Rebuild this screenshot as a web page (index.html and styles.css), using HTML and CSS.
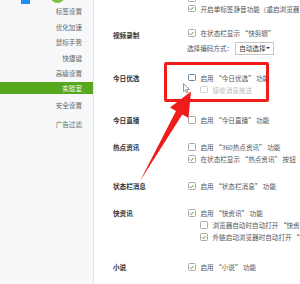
FILE: index.html
```html
<!DOCTYPE html>
<html>
<head>
<meta charset="utf-8">
<link rel="stylesheet" href="styles.css">
</head>
<body>
<div class="app">
  <aside class="sidebar">
    <div class="brand"><span class="brand-blue"></span><span class="brand-green"></span></div>
    <nav class="nav">
      <div class="nav-item">标签设置</div>
      <div class="nav-item">优化加速</div>
      <div class="nav-item">鼠标手势</div>
      <div class="nav-item">快捷键</div>
      <div class="nav-item">高级设置</div>
      <div class="nav-item active">实验室</div>
      <div class="nav-item after-active">安全设置</div>
      <div class="nav-item last">广告过滤</div>
    </nav>
  </aside>
  <main class="content">
    <section class="group g0">
      <div class="label"></div>
      <div class="options">
        <div class="row r-a"><span class="cb checked"><svg viewBox="0 0 10 10"><path d="M2.2 5.1 L4.2 7.1 L7.9 2.7"/></svg></span></div>
        <div class="row r-b"><span class="cb checked"><svg viewBox="0 0 10 10"><path d="M2.2 5.1 L4.2 7.1 L7.9 2.7"/></svg></span><span class="txt">开启单标签静音功能（重启浏览器</span></div>
      </div>
    </section>
    <section class="group g1">
      <div class="label l-low">视频录制</div>
      <div class="options">
        <div class="row"><span class="cb checked"><svg viewBox="0 0 10 10"><path d="M2.2 5.1 L4.2 7.1 L7.9 2.7"/></svg></span><span class="txt">在状态栏显示 “快剪辑”</span></div>
        <div class="row select-row"><span class="txt">选择编码方式：</span><span class="select"><span>自动选择</span><span class="caret"></span></span></div>
      </div>
    </section>
    <section class="group g2">
      <div class="label">今日优选</div>
      <div class="options">
        <div class="row"><span class="cb focus"></span><span class="txt">启用 “今日优选” 功能</span></div>
        <div class="row sub disabled"><span class="cb"></span><span class="txt">接收消息推送</span></div>
      </div>
    </section>
    <section class="group g3">
      <div class="label">今日直播</div>
      <div class="options">
        <div class="row"><span class="cb"></span><span class="txt">启用 “今日直播” 功能</span></div>
      </div>
    </section>
    <section class="group g4">
      <div class="label">热点资讯</div>
      <div class="options">
        <div class="row"><span class="cb"></span><span class="txt">启用 “360热点资讯” 功能</span></div>
        <div class="row"><span class="cb checked"><svg viewBox="0 0 10 10"><path d="M2.2 5.1 L4.2 7.1 L7.9 2.7"/></svg></span><span class="txt">在状态栏显示 “热点资讯” 按钮</span></div>
      </div>
    </section>
    <section class="group g5">
      <div class="label">状态栏消息</div>
      <div class="options">
        <div class="row"><span class="cb checked"><svg viewBox="0 0 10 10"><path d="M2.2 5.1 L4.2 7.1 L7.9 2.7"/></svg></span><span class="txt">启用 “状态栏消息” 功能</span></div>
      </div>
    </section>
    <section class="group g6">
      <div class="label">快资讯</div>
      <div class="options">
        <div class="row"><span class="cb checked"><svg viewBox="0 0 10 10"><path d="M2.2 5.1 L4.2 7.1 L7.9 2.7"/></svg></span><span class="txt">启用 “快资讯” 功能</span></div>
        <div class="row sub"><span class="cb"></span><span class="txt">浏览器自动时自动打开 “快资</span></div>
        <div class="row sub"><span class="cb checked"><svg viewBox="0 0 10 10"><path d="M2.2 5.1 L4.2 7.1 L7.9 2.7"/></svg></span><span class="txt">外链启动浏览器时自动打开 “</span></div>
      </div>
    </section>
    <section class="group g7">
      <div class="label">小说</div>
      <div class="options">
        <div class="row"><span class="cb checked"><svg viewBox="0 0 10 10"><path d="M2.2 5.1 L4.2 7.1 L7.9 2.7"/></svg></span><span class="txt">启用 “小说” 功能</span></div>
      </div>
    </section>
  </main>
  <div class="annot-box"></div>
  <svg class="annot-arrow" viewBox="0 0 300 284" width="300" height="284">
    <polygon points="191,91.5 170,107.5 176,111 140,181 182.3,114.5 188.5,118" fill="#f01c1c"/>
  </svg>
  <svg class="cursor" viewBox="0 0 8 11" width="8" height="11">
    <polygon points="0.5,0.5 0.5,8.6 2.4,6.9 3.7,9.9 5,9.3 3.8,6.5 6.4,6.5" fill="#fff" stroke="#555" stroke-width="0.6" stroke-linejoin="round"/>
  </svg>
</div>
</body>
</html>
```

FILE: styles.css
```css
html, body {
  margin: 0;
  padding: 0;
  background: #fff;
}

body {
  font-family: "Noto Sans CJK SC", "Noto Sans", sans-serif;
  font-size: 6.6px;
  color: #555;
}

.app {
  position: relative;
  width: 300px;
  height: 284px;
  overflow: hidden;
  display: flex;
  background: #fff;
}

/* Sidebar */
.sidebar {
  width: 93px;
  flex: none;
  background: #f7f8fa;
  border-right: 1px solid #e4e6ea;
  display: flex;
  flex-direction: column;
}

.brand {
  height: 4px;
  display: flex;
  align-items: flex-start;
}

.brand-blue {
  width: 9px;
  height: 4px;
  margin-left: 21px;
  background: #1f8ef0;
}

.brand-green {
  width: 15px;
  height: 15px;
  margin-left: 20px;
  margin-top: -12px;
  border-radius: 50%;
  background: #7dc242;
}

.nav {
  display: flex;
  flex-direction: column;
}

.nav-item {
  height: 15.5px;
  line-height: 15.5px;
  text-align: right;
  padding-right: 11px;
  color: #666;
  white-space: nowrap;
}

.nav-item.active {
  height: 12px;
  line-height: 12px;
  margin-top: 0.5px;
  background: #58a81f;
  color: #fff;
}

.nav-item.after-active {
  margin-top: 4px;
}

.nav-item.last {
  margin-top: 3px;
}

/* Content */
.content {
  flex: 1;
  min-width: 0;
  padding-left: 19px;
  display: flex;
  flex-direction: column;
  white-space: nowrap;
}

.group {
  display: grid;
  grid-template-columns: 75px 1fr;
}

.label {
  line-height: 12px;
  color: #333;
  font-weight: 700;
}

.label.l-low {
  padding-top: 1.5px;
}

.options {
  display: flex;
  flex-direction: column;
}

.row {
  height: 12px;
  display: flex;
  align-items: center;
  gap: 5px;
}

.row.sub {
  padding-left: 12px;
}

.txt {
  line-height: 12px;
}

.cb {
  width: 7.5px;
  height: 7.5px;
  box-sizing: border-box;
  border: 1px solid #a9a9a9;
  border-radius: 1.5px;
  background: #fff;
  flex: none;
  display: flex;
  align-items: center;
  justify-content: center;
}

.cb svg {
  width: 7px;
  height: 7px;
}

.cb svg path {
  fill: none;
  stroke: #3a9b22;
  stroke-width: 1.6;
  stroke-linecap: round;
  stroke-linejoin: round;
}

.cb.focus {
  border-color: #6b80a8;
}

.disabled .cb {
  border-color: #d0d0d0;
}

.disabled .txt {
  color: #bdbdbd;
}

.select-row {
  height: 16px;
  margin-top: 1px;
  margin-left: -1px;
  gap: 2px;
}

.select {
  width: 39px;
  height: 13px;
  box-sizing: border-box;
  border: 1px solid #c6c6c6;
  display: flex;
  align-items: center;
  justify-content: space-between;
  padding: 0 3px 0 3px;
  color: #333;
  background: #fff;
}

.caret {
  width: 0;
  height: 0;
  border-left: 2px solid transparent;
  border-right: 2px solid transparent;
  border-top: 2.5px solid #333;
}

/* group vertical rhythm */
.g0 { margin-top: -7.5px; }
.g0 .r-a { height: 11px; }
.g0 .r-b { height: 10px; }
.g1 { margin-top: 13.5px; }
.g2 { margin-top: 15.5px; }
.g3 { margin-top: 18.5px; }
.g4 { margin-top: 15px; }
.g5 { margin-top: 15px; }
.g6 { margin-top: 15px; }
.g7 { margin-top: 18px; }

/* Annotations overlaid on the screenshot */
.annot-box {
  position: absolute;
  left: 164px;
  top: 62px;
  width: 105px;
  height: 40px;
  box-sizing: border-box;
  border: 3px solid #f01c1c;
  border-radius: 2px;
}

.annot-arrow {
  position: absolute;
  left: 0;
  top: 0;
  pointer-events: none;
}

.cursor {
  position: absolute;
  left: 183px;
  top: 83px;
}
```
